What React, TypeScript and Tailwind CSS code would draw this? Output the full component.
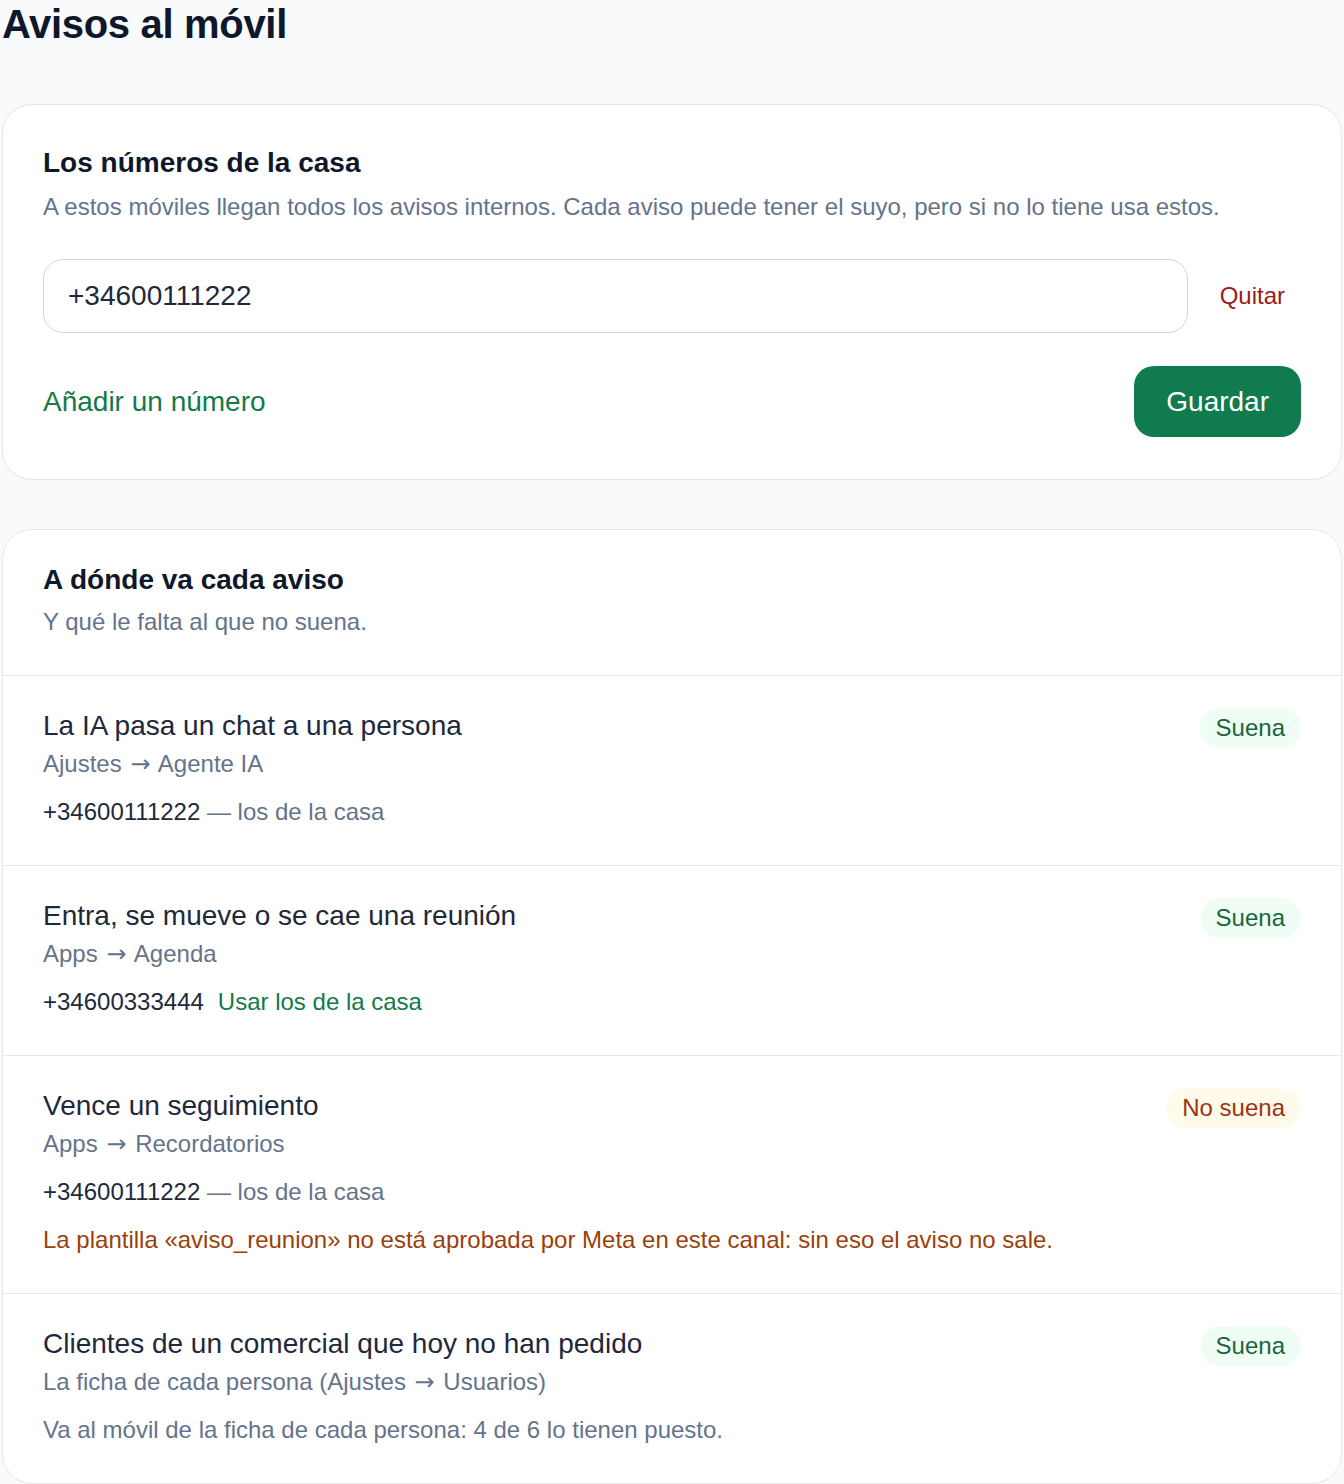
import React, { useState } from "react";

type Estado = "suena" | "no-suena";

type Aviso = {
  titulo: string;
  donde: string[];
  estado: Estado;
  numero?: string;
  propio?: boolean;
  nota?: string;
  aviso?: string;
};

const avisos: Aviso[] = [
  {
    titulo: "La IA pasa un chat a una persona",
    donde: ["Ajustes", "Agente IA"],
    estado: "suena",
    numero: "+34600111222",
  },
  {
    titulo: "Entra, se mueve o se cae una reunión",
    donde: ["Apps", "Agenda"],
    estado: "suena",
    numero: "+34600333444",
    propio: true,
  },
  {
    titulo: "Vence un seguimiento",
    donde: ["Apps", "Recordatorios"],
    estado: "no-suena",
    numero: "+34600111222",
    aviso: "La plantilla «aviso_reunion» no está aprobada por Meta en este canal: sin eso el aviso no sale.",
  },
  {
    titulo: "Clientes de un comercial que hoy no han pedido",
    donde: ["La ficha de cada persona (Ajustes", "Usuarios)"],
    estado: "suena",
    nota: "Va al móvil de la ficha de cada persona: 4 de 6 lo tienen puesto.",
  },
];

function Arrow() {
  return <span className="mx-[2px] font-['DejaVu_Sans',sans-serif]">→</span>;
}

function Badge({ estado }: { estado: Estado }) {
  if (estado === "suena") {
    return (
      <span className="shrink-0 rounded-full bg-[#f0fdf4] px-4 py-0.5 text-[24px] leading-[36px] text-[#17663a]">
        Suena
      </span>
    );
  }
  return (
    <span className="shrink-0 rounded-full bg-[#fffbeb] px-4 py-0.5 text-[24px] leading-[36px] text-[#9a3412]">
      No suena
    </span>
  );
}

export default function App() {
  const [numeros, setNumeros] = useState<string[]>(["+34600111222"]);

  return (
    <div className="min-h-screen bg-[#f8fafc] px-[2px] pb-4 font-['Liberation_Sans',Arial,sans-serif]">
      <h1 className="text-[40px] font-bold leading-[48px] tracking-[-0.008em] text-[#0f172a]">Avisos al móvil</h1>

      {/* Números de la casa */}
      <section className="mt-[56px] rounded-[30px] border border-[#e5e7eb] bg-white px-10 pb-[42px] pt-10">
        <h2 className="text-[28px] font-bold leading-[36px] text-[#0f172a]">Los números de la casa</h2>
        <p className="mt-2 text-[24px] leading-[36px] text-[#64748b]">
          A estos móviles llegan todos los avisos internos. Cada aviso puede tener el suyo, pero si no lo tiene usa estos.
        </p>

        <div className="mt-[34px] flex flex-col gap-4">
          {numeros.map((n, i) => (
            <div key={i} className="flex items-center gap-4">
              <input
                value={n}
                onChange={(e) => setNumeros(numeros.map((x, j) => (j === i ? e.target.value : x)))}
                className="h-[74px] flex-1 rounded-[20px] border-[1.5px] border-[#cbd5e1] bg-white px-6 text-[28px] text-[#1e293b] outline-none"
              />
              <button
                onClick={() => setNumeros(numeros.filter((_, j) => j !== i))}
                className="px-4 text-[24px] leading-[36px] text-[#991b1b]"
              >
                Quitar
              </button>
            </div>
          ))}
        </div>

        <div className="mt-[33px] flex items-center justify-between">
          <button
            onClick={() => setNumeros([...numeros, ""])}
            className="text-[28px] leading-[36px] text-[#137a48]"
          >
            Añadir un número
          </button>
          <button className="rounded-[20px] bg-[#0f7b4f] px-8 py-[17px] text-[28px] leading-[37px] text-white">
            Guardar
          </button>
        </div>
      </section>

      {/* A dónde va cada aviso */}
      <section className="mt-[49px] overflow-hidden rounded-[30px] border border-[#e5e7eb] bg-white">
        <div className="border-b border-[#e5e7eb] px-10 pb-[35px] pt-8">
          <h2 className="text-[28px] font-bold leading-[36px] text-[#0f172a]">A dónde va cada aviso</h2>
          <p className="mt-1.5 text-[24px] leading-[36px] text-[#64748b]">Y qué le falta al que no suena.</p>
        </div>

        {avisos.map((a, i) => (
          <div
            key={i}
            className={`flex items-start justify-between gap-6 px-10 pb-[35px] pt-8 ${
              i < avisos.length - 1 ? "border-b border-[#e5e7eb]" : ""
            }`}
          >
            <div className="flex flex-col">
              <div className="text-[28px] leading-[36px] text-[#1e293b]">{a.titulo}</div>
              <div className="mt-0.5 text-[24px] leading-[36px] text-[#64748b]">
                {a.donde[0]} <Arrow /> {a.donde[1]}
              </div>
              {a.numero && (
                <div className="mt-3 flex items-center gap-[14px] text-[24px] leading-[36px]">
                  {a.propio ? (
                    <>
                      <span className="text-[#1e293b]">{a.numero}</span>
                      <button className="text-[#137a48]">Usar los de la casa</button>
                    </>
                  ) : (
                    <span className="text-[#1e293b]">
                      {a.numero} <span className="text-[#64748b]">— los de la casa</span>
                    </span>
                  )}
                </div>
              )}
              {a.nota && <div className="mt-3 text-[24px] leading-[36px] text-[#64748b]">{a.nota}</div>}
              {a.aviso && <div className="mt-3 text-[24px] leading-[36px] text-[#9a3f0c]">{a.aviso}</div>}
            </div>
            <Badge estado={a.estado} />
          </div>
        ))}
      </section>
    </div>
  );
}
